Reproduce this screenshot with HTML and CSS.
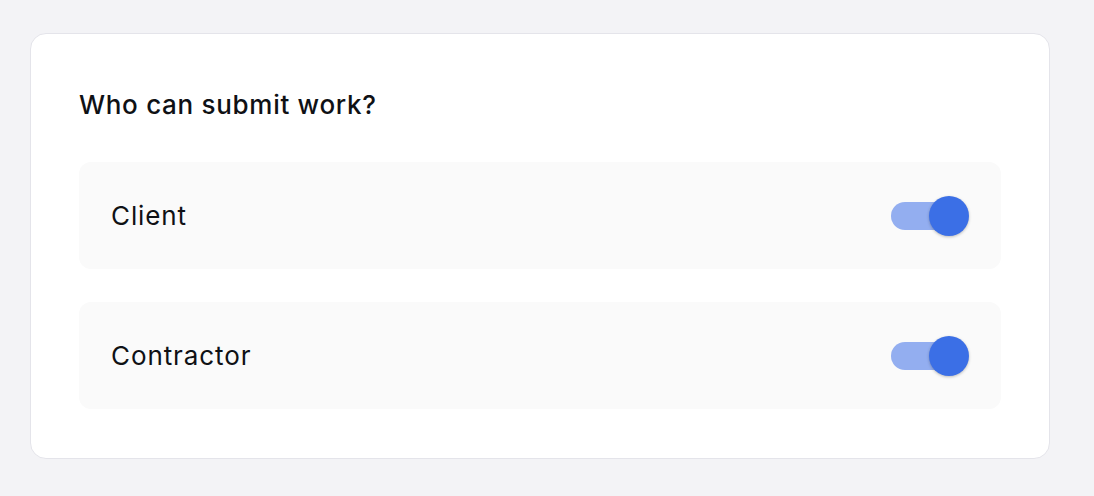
FILE: index.html
```html
<!DOCTYPE html>
<html>
<head>
<meta charset="utf-8">
<link rel="stylesheet" href="styles.css">
</head>
<body>
<div class="card">
  <h2 class="title">Who can submit work?</h2>
  <div class="rows">
    <div class="row">
      <span class="label">Client</span>
      <span class="switch on"><span class="track"></span><span class="knob"></span></span>
    </div>
    <div class="row">
      <span class="label">Contractor</span>
      <span class="switch on"><span class="track"></span><span class="knob"></span></span>
    </div>
  </div>
</div>
</body>
</html>
```
FILE: styles.css
```css
html, body {
  margin: 0;
  padding: 0;
  background: #f3f3f6;
}
body {
  font-family: Inter, "Noto Sans", sans-serif;
  color: #0f1115;
  padding: 33px 44px 0 30px;
}
.card {
  background: #ffffff;
  border: 1px solid #e4e4ea;
  border-radius: 16px;
  padding: 48px;
  height: 426px;
  box-sizing: border-box;
}
.title {
  margin: 7px 0 41px 0;
  font-size: 26px;
  font-weight: 450;
  line-height: 32px;
  letter-spacing: 0.7px;
}
.rows {
  display: flex;
  flex-direction: column;
  gap: 33px;
}
.row {
  background: #fafafa;
  border-radius: 12px;
  padding: 33px 32px;
  display: flex;
  align-items: center;
  justify-content: space-between;
  height: 107px;
  box-sizing: border-box;
}
.label {
  font-size: 26px;
  line-height: 32px;
  font-weight: 400;
  letter-spacing: 0.9px;
}
.switch {
  position: relative;
  width: 78px;
  height: 40px;
  display: block;
}
.track {
  position: absolute;
  left: 0;
  top: 6px;
  width: 68px;
  height: 28px;
  border-radius: 14px;
  background: #93aef0;
}
.knob {
  position: absolute;
  right: 0;
  top: 0;
  width: 40px;
  height: 40px;
  border-radius: 50%;
  background: #3b6fe6;
  box-shadow: 0 1px 3px rgba(0,0,0,0.25);
}
```
